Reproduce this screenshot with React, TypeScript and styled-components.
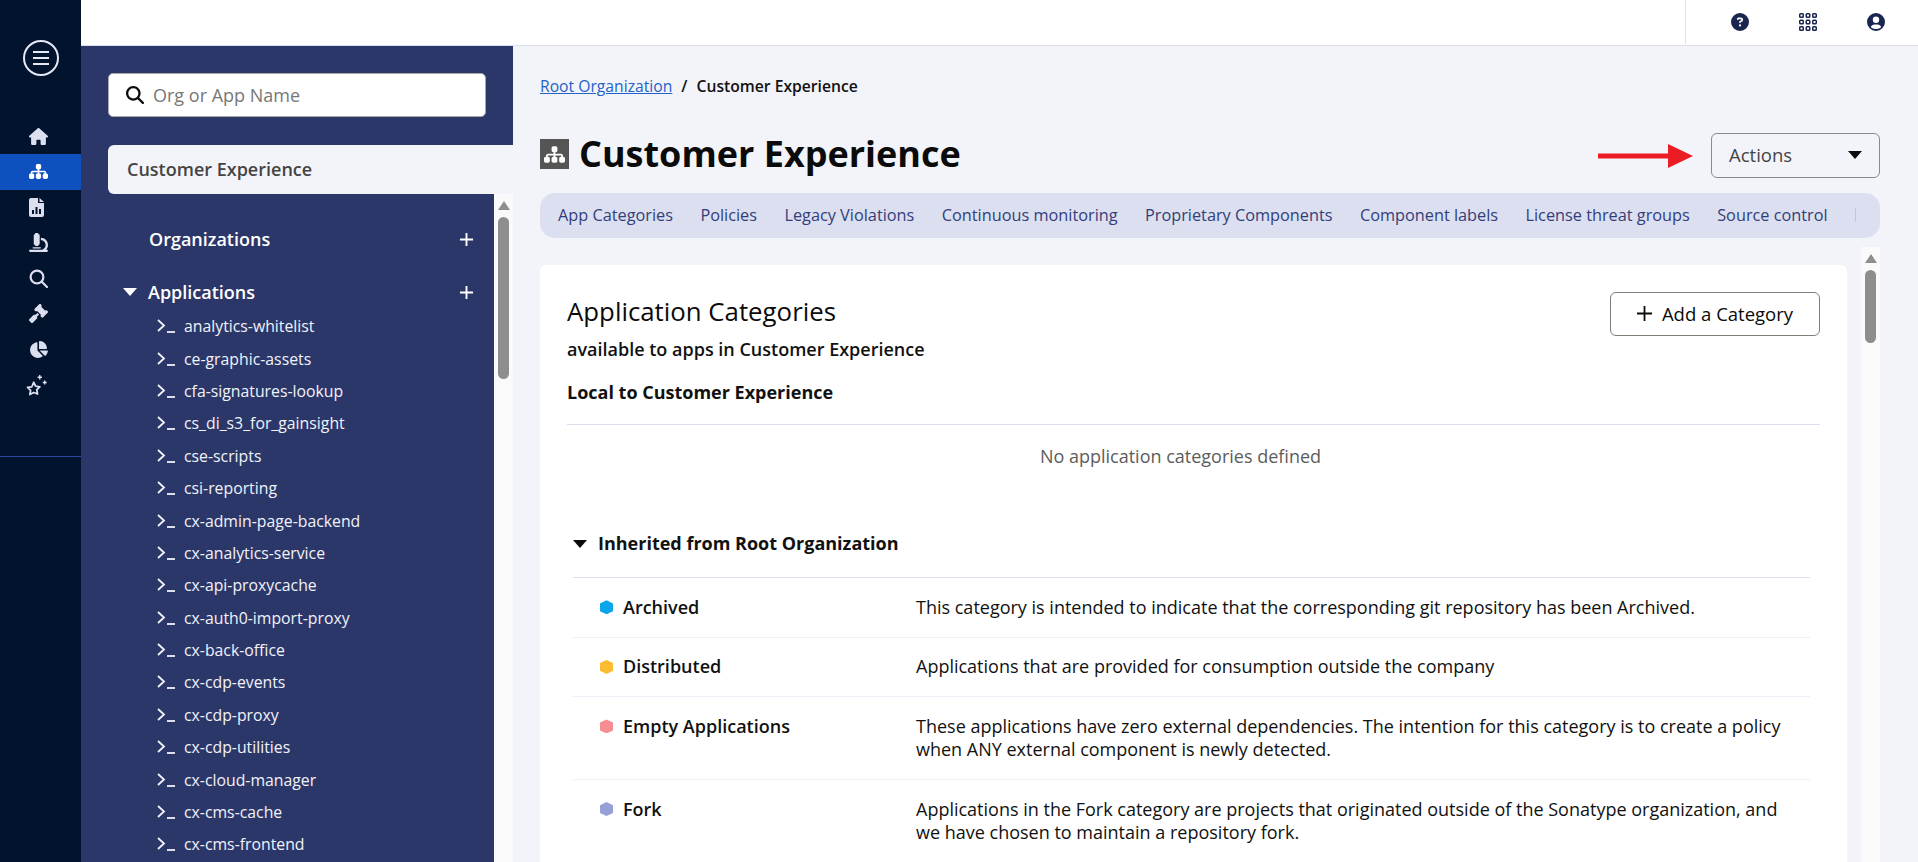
import React from 'react';
import styled, { createGlobalStyle } from 'styled-components';
import { FaHouse, FaSitemap, FaMicroscope, FaGavel, FaChartPie, FaMagnifyingGlass, FaCircleQuestion } from 'react-icons/fa6';

const apps = [
  'analytics-whitelist',
  'ce-graphic-assets',
  'cfa-signatures-lookup',
  'cs_di_s3_for_gainsight',
  'cse-scripts',
  'csi-reporting',
  'cx-admin-page-backend',
  'cx-analytics-service',
  'cx-api-proxycache',
  'cx-auth0-import-proxy',
  'cx-back-office',
  'cx-cdp-events',
  'cx-cdp-proxy',
  'cx-cdp-utilities',
  'cx-cloud-manager',
  'cx-cms-cache',
  'cx-cms-frontend',
];

const tabs = [
  'App Categories',
  'Policies',
  'Legacy Violations',
  'Continuous monitoring',
  'Proprietary Components',
  'Component labels',
  'License threat groups',
  'Source control',
];

const categories = [
  {
    name: 'Archived',
    color: '#0ca5e9',
    text: 'This category is intended to indicate that the corresponding git repository has been Archived.',
  },
  {
    name: 'Distributed',
    color: '#fdbb2f',
    text: 'Applications that are provided for consumption outside the company',
  },
  {
    name: 'Empty Applications',
    color: '#f58d92',
    text: 'These applications have zero external dependencies. The intention for this category is to create a policy when ANY external component is newly detected.',
  },
  {
    name: 'Fork',
    color: '#97a0d6',
    text: 'Applications in the Fork category are projects that originated outside of the Sonatype organization, and we have chosen to maintain a repository fork.',
  },
];

const GlobalStyle = createGlobalStyle`
  html, body {
    margin: 0;
    padding: 0;
    height: 100%;
    overflow: hidden;
  }
  body {
    font-family: "Open Sans", "Liberation Sans", sans-serif;
    background: #f3f4fa;
  }
`;

const Page = styled.div`
  display: flex;
  width: 1918px;
  height: 862px;
  overflow: hidden;
`;

const Rail = styled.nav`
  flex: 0 0 81px;
  display: flex;
  flex-direction: column;
  background: #02132e;
  padding-top: 40px;
  box-sizing: border-box;
`;

const MenuButton = styled.button`
  width: 36px;
  height: 36px;
  margin: 0 0 42.5px 23px;
  padding: 0;
  border: 2px solid #e6e9f5;
  border-radius: 50%;
  background: none;
  display: flex;
  flex-direction: column;
  align-items: center;
  justify-content: center;
  gap: 4px;
`;

const MenuBar = styled.span`
  display: block;
  width: 16px;
  height: 2px;
  background: #e6e9f5;
`;

const RailItem = styled.a<{ $active?: boolean }>`
  height: 35.5px;
  display: flex;
  align-items: center;
  padding-left: 29px;
  color: ${({ $active }) => ($active ? '#ffffff' : '#dcdff0')};
  background: ${({ $active }) => ($active ? '#0f50bf' : 'transparent')};
  font-size: 19px;
`;

const RailDivider = styled.div`
  margin-top: 53px;
  height: 1px;
  background: #2b48a0;
`;

const Column = styled.div`
  flex: 1;
  display: flex;
  flex-direction: column;
  min-width: 0;
`;

const TopBar = styled.header`
  flex: 0 0 46px;
  box-sizing: border-box;
  display: flex;
  justify-content: flex-end;
  background: #ffffff;
  border-bottom: 1px solid #dcdff0;
`;

const TopActions = styled.div`
  width: 233px;
  height: 44px;
  box-sizing: border-box;
  border-left: 1px solid #dcdff0;
  display: flex;
  align-items: center;
  padding-left: 45px;
  gap: 50px;
  color: #1a2550;
`;

const Body = styled.div`
  flex: 1;
  display: flex;
  min-height: 0;
`;

const OrgPanel = styled.aside`
  flex: 0 0 432px;
  display: flex;
  flex-direction: column;
`;

const SearchArea = styled.div`
  background: #2c3769;
  padding: 27px 27px 28px 27px;
`;

const SearchBox = styled.div`
  height: 44px;
  box-sizing: border-box;
  display: flex;
  align-items: center;
  gap: 9px;
  padding-left: 17px;
  background: #ffffff;
  border: 1px solid #a8a8a8;
  border-radius: 5px;
  font-size: 18px;
  color: #777777;
  font-weight: 400;
`;

const TabRow = styled.div`
  background: #2c3769;
`;

const OrgTab = styled.div`
  margin-left: 27px;
  height: 49px;
  box-sizing: border-box;
  display: flex;
  align-items: center;
  padding: 0 0 2px 19px;
  background: #f3f4fa;
  border-radius: 6px 0 0 6px;
  font-size: 18px;
  font-weight: 600;
  color: #444444;
`;

const ListRow = styled.div`
  flex: 1;
  display: flex;
  min-height: 0;
`;

const OrgList = styled.div`
  flex: 1;
  background: #2c3769;
  color: #ffffff;
  padding-top: 30px;
  overflow: hidden;
`;

const GroupHead = styled.div<{ $gap: number }>`
  height: 30px;
  display: flex;
  align-items: center;
  margin-bottom: ${({ $gap }) => $gap}px;
  padding: 0 20px 0 42px;
  font-size: 18px;
  font-weight: 600;
  color: #ffffff;
`;

const Caret = styled.span`
  width: 0;
  height: 0;
  margin-right: 11px;
  border-left: 7.5px solid transparent;
  border-right: 7.5px solid transparent;
  border-top: 8px solid #ffffff;
`;

const CaretGap = styled.span`
  width: 26px;
`;

const GroupLabel = styled.span`
  flex: 1;
`;

const PlusIcon = styled.svg`
  width: 15px;
  height: 15px;
`;

const AppRow = styled.div`
  height: 32.4px;
  display: flex;
  align-items: center;
  padding-left: 76px;
  gap: 9px;
  font-size: 15.8px;
  color: #f1f2fa;
`;

const Track = styled.div`
  flex: 0 0 19px;
  display: flex;
  flex-direction: column;
  align-items: center;
  background: #fafafa;
  padding-top: 7px;
  box-sizing: border-box;
`;

const TrackArrow = styled.span`
  width: 0;
  height: 0;
  border-left: 6px solid transparent;
  border-right: 6px solid transparent;
  border-bottom: 9px solid #8e8e8e;
`;

const Thumb = styled.span<{ $height: number }>`
  width: 11px;
  height: ${({ $height }) => $height}px;
  margin-top: 7px;
  border-radius: 6px;
  background: #8e8e8e;
`;

const Main = styled.main`
  flex: 1;
  display: flex;
  flex-direction: column;
  min-width: 0;
  padding: 0 38px 0 27px;
`;

const Crumbs = styled.div`
  margin-top: 29px;
  height: 22px;
  display: flex;
  align-items: center;
  gap: 9px;
  font-size: 15.7px;
  font-weight: 600;
  color: #111111;
`;

const CrumbLink = styled.a`
  color: #2462c8;
  font-weight: 400;
  text-decoration: underline;
`;

const TitleRow = styled.div`
  margin-top: 36px;
  height: 45px;
  display: flex;
  align-items: center;
`;

const TitleIcon = styled.span`
  width: 29px;
  height: 30px;
  margin: 0 10px 3px 0;
  display: flex;
  align-items: center;
  justify-content: center;
  background: #555555;
  color: #ffffff;
  font-size: 21px;
`;

const Title = styled.h1`
  flex: 1;
  margin: 0 0 4px;
  font-size: 36px;
  font-weight: 700;
  color: #0b0b0b;
`;

const ArrowMark = styled.svg`
  width: 95px;
  height: 24px;
  margin-right: 18px;
`;

const ActionsButton = styled.button`
  width: 169px;
  height: 45px;
  box-sizing: border-box;
  display: flex;
  align-items: center;
  justify-content: space-between;
  padding: 0 17px 2px;
  border: 1px solid #8a8a8a;
  border-radius: 6px;
  background: transparent;
  font-family: inherit;
  font-size: 18.5px;
  color: #444444;
`;

const ActionsCaret = styled.span`
  width: 0;
  height: 0;
  border-left: 7.5px solid transparent;
  border-right: 7.5px solid transparent;
  border-top: 8px solid #0b0b0b;
`;

const TabBar = styled.div`
  margin-top: 15px;
  height: 45px;
  flex: 0 0 45px;
  box-sizing: border-box;
  display: flex;
  align-items: center;
  gap: 27.4px;
  padding: 0 0 2px 18px;
  background: #dcdff0;
  border-radius: 15px;
  overflow: hidden;
`;

const TabLink = styled.a`
  font-size: 16.3px;
  color: #323e7a;
  white-space: nowrap;
`;

const TabEdge = styled.span`
  width: 1px;
  height: 14px;
  background: #c2c6dd;
`;

const Content = styled.div`
  flex: 1;
  display: flex;
  gap: 14px;
  margin-top: 9px;
  min-height: 0;
`;

const CardArea = styled.div`
  flex: 1;
  padding-top: 18px;
  min-width: 0;
`;

const Card = styled.section`
  height: 100%;
  box-sizing: border-box;
  padding: 27px 27px 0;
  background: #ffffff;
  border-radius: 6px 6px 0 0;
`;

const CardHead = styled.div`
  display: flex;
  justify-content: space-between;
  height: 88.5px;
`;

const CardTitle = styled.h2`
  margin: 0;
  font-size: 25.8px;
  font-weight: 500;
  line-height: 38px;
  color: #0b0b0b;
`;

const CardSub = styled.p`
  margin: 7.5px 0 0;
  font-size: 18px;
  font-weight: 600;
  line-height: 23px;
  color: #111111;
`;

const AddButton = styled.button`
  width: 210px;
  height: 44px;
  box-sizing: border-box;
  display: flex;
  align-items: center;
  justify-content: center;
  gap: 10px;
  padding: 0 0 2px;
  border: 1px solid #7f7f75;
  border-radius: 6px;
  background: #ffffff;
  font-family: inherit;
  font-size: 18.5px;
  font-weight: 500;
  color: #0b0b0b;
`;

const LocalHead = styled.h3`
  margin: 0;
  height: 43.5px;
  font-size: 18px;
  font-weight: 700;
  line-height: 23px;
  color: #111111;
  border-bottom: 1px solid #dcdff0;
`;

const Empty = styled.div`
  height: 59px;
  padding: 20px 26px 0 0;
  box-sizing: border-box;
  line-height: 23px;
  text-align: center;
  font-size: 18px;
  color: #5c5c5c;
`;

const Inherited = styled.div`
  margin: 0 10px 0 6px;
  padding-top: 47.5px;
`;

const InheritedHead = styled.div`
  height: 46.5px;
  box-sizing: border-box;
  display: flex;
  align-items: flex-start;
  font-size: 18px;
  font-weight: 700;
  line-height: 23px;
  color: #111111;
  border-bottom: 1px solid #dcdff0;
`;

const HeadCaret = styled(ActionsCaret)`
  margin: 8px 11px 0 0;
`;

const Row = styled.div`
  display: flex;
  padding: 17.8px 0;
  border-bottom: 1px solid #eef0f7;
  font-size: 18px;
  line-height: 23px;
  &:last-child {
    border-bottom: none;
  }
`;

const RowName = styled.div`
  flex: 0 0 343px;
  box-sizing: border-box;
  padding-left: 27px;
  display: flex;
  align-items: center;
  align-self: flex-start;
  gap: 10px;
  font-weight: 600;
  color: #111111;
`;

const Hexagon = styled.span<{ $color: string }>`
  width: 13px;
  height: 14px;
  background: ${({ $color }) => $color};
  clip-path: polygon(50% 0, 100% 22%, 100% 78%, 50% 100%, 0 78%, 0 22%);
`;

const RowText = styled.div`
  flex: 1;
  color: #111111;
  padding-right: 20px;
`;

const StarsSvg = styled.svg`
  margin-left: -3px;
`;

const FileChartIcon = () => (
  <svg width="15" height="19" viewBox="0 0 15 19" fill="currentColor">
    <path d="M2 0h7v5h6v12a2 2 0 0 1-2 2H2a2 2 0 0 1-2-2V2a2 2 0 0 1 2-2z" />
    <path d="M10.5 0 15 4h-4.5z" />
    <path d="M3 12h2v4H3zM6.5 9h2v7h-2zM10 11h2v5h-2z" fill="#02132e" />
  </svg>
);

const StarsIcon = () => (
  <StarsSvg width="22" height="22" viewBox="0 0 20 20" fill="none" stroke="currentColor">
    <path d="M7 7.5l1.7 3.6 3.9.5-2.8 2.7.7 3.9L7 16.8l-3.5 1.9.7-3.9-2.8-2.7 3.9-.5z" strokeWidth="1.6" strokeLinejoin="round" />
    <path d="M12.5 1v4M10.5 3h4M17 6v3.5M15.2 7.8h3.6" strokeWidth="1.3" />
  </StarsSvg>
);

const LensIcon = () => (
  <svg width="19" height="19" viewBox="0 0 19 19" fill="none" stroke="currentColor" strokeWidth="2.2">
    <circle cx="8" cy="8" r="6.4" />
    <path d="M12.8 12.8 18 18" strokeLinecap="round" />
  </svg>
);

const TerminalIcon = () => (
  <svg width="18" height="14" viewBox="0 0 18 14" fill="none" stroke="currentColor" strokeWidth="1.8">
    <path d="M1 1l6 5.5L1 12" />
    <path d="M10 13h8" />
  </svg>
);

const GridIcon = () => (
  <svg width="18" height="18" viewBox="0 0 18 18" fill="none" stroke="currentColor" strokeWidth="1.5">
    {[0, 6.5, 13].map((y) =>
      [0, 6.5, 13].map((x) => <rect key={`${x}-${y}`} x={x + 0.75} y={y + 0.75} width="3.5" height="3.5" rx="0.8" />),
    )}
  </svg>
);

const UserIcon = () => (
  <svg width="18" height="18" viewBox="0 0 18 18" fill="currentColor">
    <path
      fillRule="evenodd"
      d="M9 0a9 9 0 1 1 0 18A9 9 0 0 1 9 0zm0 3.6a3.2 3.2 0 1 0 0 6.4 3.2 3.2 0 0 0 0-6.4zM3.8 14.2A6.8 6.8 0 0 0 9 16a6.8 6.8 0 0 0 5.2-1.8c-.6-1.6-2-2.6-3.7-2.6h-3c-1.7 0-3.1 1-3.7 2.6z"
    />
  </svg>
);

const Plus = () => (
  <PlusIcon viewBox="0 0 16 16" stroke="#ffffff" strokeWidth="2">
    <path d="M8 1v14M1 8h14" />
  </PlusIcon>
);

const App: React.FC = () => (
  <>
    <GlobalStyle />
    <Page>
      <Rail>
        <MenuButton aria-label="menu">
          <MenuBar />
          <MenuBar />
          <MenuBar />
        </MenuButton>
        <RailItem><FaHouse /></RailItem>
        <RailItem $active><FaSitemap /></RailItem>
        <RailItem><FileChartIcon /></RailItem>
        <RailItem><FaMicroscope /></RailItem>
        <RailItem><LensIcon /></RailItem>
        <RailItem><FaGavel /></RailItem>
        <RailItem><FaChartPie /></RailItem>
        <RailItem><StarsIcon /></RailItem>
        <RailDivider />
      </Rail>
      <Column>
        <TopBar>
          <TopActions>
            <FaCircleQuestion size={18} />
            <GridIcon />
            <UserIcon />
          </TopActions>
        </TopBar>
        <Body>
          <OrgPanel>
            <SearchArea>
              <SearchBox>
                <FaMagnifyingGlass size={18} color="#0b0b0b" />
                Org or App Name
              </SearchBox>
            </SearchArea>
            <TabRow>
              <OrgTab>Customer Experience</OrgTab>
            </TabRow>
            <ListRow>
              <OrgList>
                <GroupHead $gap={23}>
                  <CaretGap />
                  <GroupLabel>Organizations</GroupLabel>
                  <Plus />
                </GroupHead>
                <GroupHead $gap={3}>
                  <Caret />
                  <GroupLabel>Applications</GroupLabel>
                  <Plus />
                </GroupHead>
                {apps.map((name) => (
                  <AppRow key={name}>
                    <TerminalIcon />
                    {name}
                  </AppRow>
                ))}
              </OrgList>
              <Track>
                <TrackArrow />
                <Thumb $height={162} />
              </Track>
            </ListRow>
          </OrgPanel>
          <Main>
            <Crumbs>
              <CrumbLink>Root Organization</CrumbLink>
              <span>/</span>
              <span>Customer Experience</span>
            </Crumbs>
            <TitleRow>
              <TitleIcon><FaSitemap /></TitleIcon>
              <Title>Customer Experience</Title>
              <ArrowMark viewBox="0 0 95 24">
                <path d="M0 9.5h70V0l25 12-25 12v-9.5H0z" fill="#ec1c24" />
              </ArrowMark>
              <ActionsButton>
                Actions
                <ActionsCaret />
              </ActionsButton>
            </TitleRow>
            <TabBar>
              {tabs.map((tab) => (
                <TabLink key={tab}>{tab}</TabLink>
              ))}
              <TabEdge />
            </TabBar>
            <Content>
              <CardArea>
                <Card>
                  <CardHead>
                    <div>
                      <CardTitle>Application Categories</CardTitle>
                      <CardSub>available to apps in Customer Experience</CardSub>
                    </div>
                    <AddButton>
                      <svg width="15" height="15" viewBox="0 0 15 15" stroke="#0b0b0b" strokeWidth="1.8">
                        <path d="M7.5 0v15M0 7.5h15" />
                      </svg>
                      Add a Category
                    </AddButton>
                  </CardHead>
                  <LocalHead>Local to Customer Experience</LocalHead>
                  <Empty>No application categories defined</Empty>
                  <Inherited>
                    <InheritedHead>
                      <HeadCaret />
                      Inherited from Root Organization
                    </InheritedHead>
                    {categories.map((cat) => (
                      <Row key={cat.name}>
                        <RowName>
                          <Hexagon $color={cat.color} />
                          {cat.name}
                        </RowName>
                        <RowText>{cat.text}</RowText>
                      </Row>
                    ))}
                  </Inherited>
                </Card>
              </CardArea>
              <Track>
                <TrackArrow />
                <Thumb $height={73} />
              </Track>
            </Content>
          </Main>
        </Body>
      </Column>
    </Page>
  </>
);

export default App;
